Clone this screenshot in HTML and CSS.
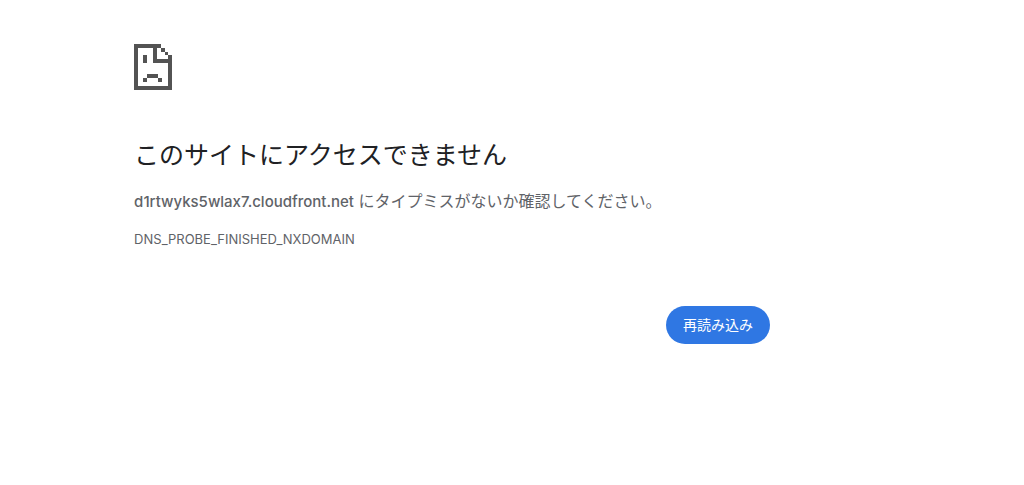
FILE: index.html
```html
<!DOCTYPE html>
<html lang="ja">
<head>
<meta charset="utf-8">
<meta name="viewport" content="width=device-width, initial-scale=1">
<title>d1rtwyks5wlax7.cloudfront.net</title>
<link rel="stylesheet" href="styles.css">
</head>
<body>
<main class="error-page">
  <svg class="error-icon" viewBox="0 0 38 46" aria-hidden="true">
    <path fill="#535353" fill-rule="evenodd" d="M0 0H27V4H31V8H34V11H38V46H0ZM4 4V42H34V19H19V4ZM23 4V15H34V11H31V8H27V4Z"/>
    <path fill="#535353" d="M9 11h4v8H9zM13 30h11v4H13zM9 34h4v4H9zM24 34h4v4h-4z"/>
  </svg>
  <h1 class="error-title">このサイトにアクセスできません</h1>
  <p class="error-message"><span class="host">d1rtwyks5wlax7.cloudfront.net</span> にタイプミスがないか確認してください。</p>
  <p class="error-code">DNS_PROBE_FINISHED_NXDOMAIN</p>
  <div class="actions"><button class="reload" type="button">再読み込み</button></div>
</main>
</body>
</html>
```
FILE: styles.css
```css
body {
  margin: 0;
  background: #fff;
  color: #5f6368;
  font-family: Inter, "Noto Sans CJK JP", sans-serif;
}
.error-page {
  max-width: 636px;
  margin: 0 13%;
  padding: 44px 0 0 1px;
}
.error-icon {
  display: block;
  width: 38px;
  height: 46px;
}
.error-title {
  margin: 45px 0 0;
  color: #202124;
  font-size: 25px;
  font-weight: 400;
  line-height: 40px;
}
.error-message {
  margin: 14px 0 0;
  font-size: 16px;
  line-height: 24px;
}
.host {
  font-size: 15px;
  font-weight: 500;
}
.error-code {
  margin: 15px 0 0;
  font-size: 13px;
  line-height: 20px;
}
.actions {
  display: flex;
  justify-content: flex-end;
  margin-top: 57px;
}
.reload {
  padding: 9px 17px;
  border: 0;
  border-radius: 20px;
  background: #2f77e3;
  color: #fff;
  font-family: inherit;
  font-size: 14px;
  font-weight: 400;
  line-height: 20px;
  cursor: pointer;
}
```
